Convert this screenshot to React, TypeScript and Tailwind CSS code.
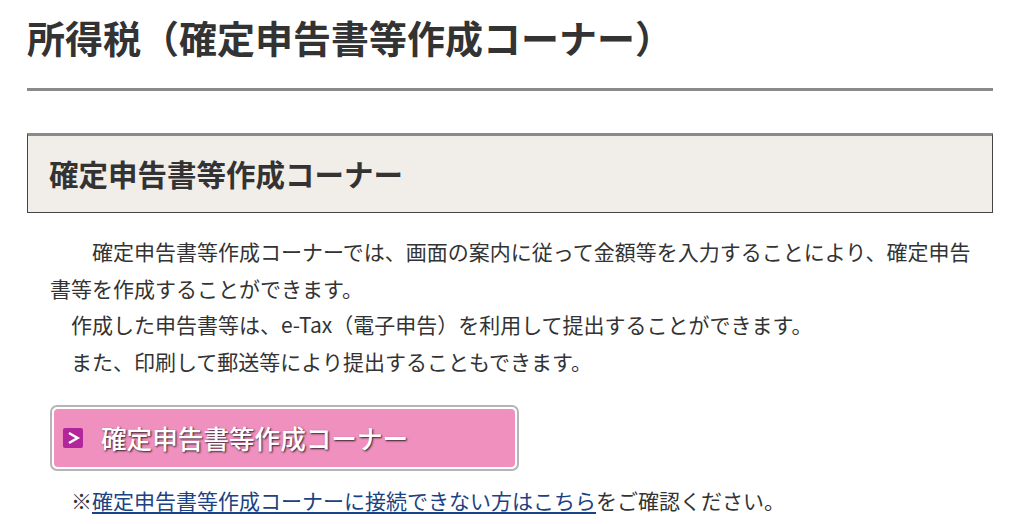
export default function App() {
  const font = { fontFamily: '"Noto Sans CJK JP", "Noto Sans", sans-serif' };
  return (
    <div className="min-h-screen bg-white px-[27px] pt-[18px] pr-[31px] text-[#333]" style={font}>
      {/* Page title */}
      <h1 className="text-[38px] font-bold leading-[38px] text-[#333]">所得税（確定申告書等作成コーナー）</h1>
      <div className="mt-[32px] border-b-[3px] border-[#8a8a8a]" />

      {/* Section heading */}
      <h2 className="mt-[42px] flex h-[80px] items-center border-x border-b border-t-[3px] border-x-[#444] border-b-[#444] border-t-[#8a8a8a] bg-[#f1ede8] px-[21px] text-[29.5px] font-bold leading-none text-[#333]">
        確定申告書等作成コーナー
      </h2>

      <div className="pl-[23px] pr-[10px] text-[21px] leading-[36.5px]">
        <p className="mt-[20px] indent-[2em]">
          確定申告書等作成コーナーでは、画面の案内に従って金額等を入力することにより、確定申告書等を作成することができます。
        </p>
        <p className="indent-[1em]">作成した申告書等は、e-Tax（電子申告）を利用して提出することができます。</p>
        <p className="indent-[1em]">また、印刷して郵送等により提出することもできます。</p>

        {/* Link button */}
        <a
          href="#"
          className="mt-[26px] block w-[469px] rounded-[7px] border-2 border-[#b5b5b5] bg-white p-[2px]"
        >
          <span className="flex h-[58px] items-center gap-[18px] rounded-[4px] bg-[#ef90bf] pl-[9px]">
            <span className="flex h-[20px] w-[20px] items-center justify-center rounded-[2px] bg-[#b3269b]">
              <svg width="20" height="20" viewBox="0 0 20 20">
                <path d="M6 5 L14.5 10 L6 15" fill="none" stroke="white" strokeWidth="2.6" />
              </svg>
            </span>
            <span className="text-[25.6px] font-medium leading-none text-white [text-shadow:1px_1px_2px_rgba(0,0,0,0.8)]">
              確定申告書等作成コーナー
            </span>
          </span>
        </a>

        <p className="mt-[11px] indent-[1em] text-[21px] leading-[36px]">
          ※
          <a href="#" className="text-[#1b4282] underline underline-offset-[3px]">
            確定申告書等作成コーナーに接続できない方はこちら
          </a>
          をご確認ください。
        </p>
      </div>
    </div>
  );
}
